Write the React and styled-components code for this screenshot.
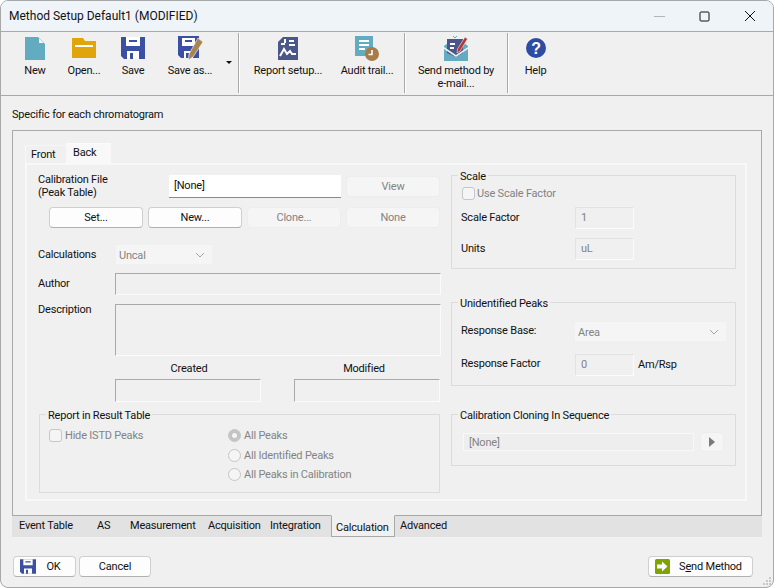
import styled, { createGlobalStyle } from "styled-components";

const GlobalStyle = createGlobalStyle`
    * { box-sizing: border-box; }
    html, body { margin: 0; padding: 0; background: #fff; }
    body { font-family: "Roboto", "Liberation Sans", sans-serif; font-size: 11px; letter-spacing: -0.2px; color: #111; }
`

const Window = styled.div`
    width: 774px;
    height: 588px;
    display: flex;
    flex-direction: column;
    position: relative;
    overflow: hidden;
    background: #f0f0f0;
    border: 1px solid #a8a8a8;
    border-radius: 8px;
`

const TitleBar = styled.div`
    height: 31px;
    flex: none;
    display: flex;
    align-items: center;
    justify-content: space-between;
    padding-left: 8px;
    background: #eff4f9;
    border-bottom: 1px solid #a9a9a9;
    font-size: 12px;
    letter-spacing: 0;
`

const WinButtons = styled.div`
    display: flex;
    align-items: center;
    gap: 34px;
    padding-right: 17px;
`

const Toolbar = styled.div`
    height: 64px;
    flex: none;
    display: flex;
    padding-left: 10px;
    border-bottom: 1px solid #a9a9a9;
`

const ToolButton = styled.div`
    width: ${(props) => props.$w}px;
    display: flex;
    flex-direction: column;
    align-items: center;
    padding-top: 3px;
    text-align: center;
    line-height: 13px;
`

const IconSlot = styled.div`
    height: 26px;
    display: flex;
    align-items: center;
    justify-content: center;
    margin-bottom: 3px;
`

const DropArrow = styled.div`
    width: 0;
    height: 0;
    margin: 29px 6px 0 3px;
    border-left: 3px solid transparent;
    border-right: 3px solid transparent;
    border-top: 3px solid #111;
`

const ToolSep = styled.div`
    width: 1px;
    height: 60px;
    margin: 1px ${(props) => props.$right || 0}px 0 ${(props) => props.$left || 0}px;
    background: #a9a9a9;
    box-shadow: 1px 0 0 #fff;
`

const Note = styled.div`
    height: 34px;
    flex: none;
    padding: 12px 0 0 11px;
    line-height: 14px;
`

const TabFrame = styled.div`
    height: 386px;
    flex: none;
    margin: 0 11px;
    padding: 12px 14px 0 12px;
    border: 1px solid #a9a9a9;
`

const TabStrip = styled.div`
    height: 20px;
    display: flex;
    align-items: flex-end;
`

const SmallTab = styled.div`
    height: ${(props) => (props.$active ? 20 : 18)}px;
    width: ${(props) => (props.$active ? 45 : 41)}px;
    padding: ${(props) => (props.$active ? "2px 0 0 6px" : "2px 0 0 5px")};
    line-height: 14px;
    background: ${(props) => (props.$active ? "#f8f8f8" : "#f0f0f0")};
    border-top: ${(props) => (props.$active ? "1px solid #fbfbfb" : "1px solid #f6f6f6")};
    border-left: 1px solid #f8f8f8;
`

const TabPage = styled.div`
    height: 338px;
    display: grid;
    grid-template-columns: 403px 285px;
    column-gap: 10px;
    padding: 10px 0 0 11px;
    border: 2px solid #f8f8f8;
    background: #f0f0f0;
`

const Column = styled.div`
    display: flex;
    flex-direction: column;
`

const Row = styled.div`
    display: flex;
    align-items: ${(props) => props.$align || "center"};
    gap: ${(props) => props.$gap || 0}px;
    height: ${(props) => (props.$h ? props.$h + "px" : "auto")};
    margin-top: ${(props) => props.$top || 0}px;
    margin-left: ${(props) => props.$left || 0}px;
    color: ${(props) => (props.$dim ? "#838383" : "inherit")};
`

const Label = styled.div`
    width: ${(props) => (props.$w ? props.$w + "px" : "auto")};
    flex: none;
    line-height: ${(props) => props.$lh || 14}px;
    margin-top: ${(props) => props.$top || 0}px;
    margin-left: ${(props) => props.$left || 0}px;
`

const FileField = styled.div`
    width: 172px;
    height: 23px;
    padding: 4px 0 0 5px;
    line-height: 14px;
    background: #fff;
    border-bottom: 1px solid #8a8a8a;
    margin-left: 1px;
`

const PushButton = styled.div`
    width: ${(props) => props.$w || 94}px;
    height: ${(props) => props.$h || 21}px;
    flex: none;
    display: flex;
    align-items: center;
    justify-content: center;
    margin-left: ${(props) => props.$left || 0}px;
    margin-top: ${(props) => props.$top || 0}px;
    border-radius: 4px;
    background: ${(props) => (props.$off ? "#f5f5f5" : "#fdfdfd")};
    border: 1px solid ${(props) => (props.$off ? "#ededed" : "#cfcfcf")};
    border-bottom-color: ${(props) => (props.$off ? "#ededed" : "#b0b0b0")};
    color: ${(props) => (props.$off ? "#838383" : "#111")};
`

const Select = styled.div`
    width: ${(props) => props.$w}px;
    height: 21px;
    display: flex;
    align-items: center;
    justify-content: space-between;
    padding: 1px 7px 0 3px;
    background: #f5f5f5;
    border: 1px solid #f0f0f0;
    color: #838383;
`

const SunkenBox = styled.div`
    width: ${(props) => props.$w}px;
    height: ${(props) => props.$h}px;
    flex: none;
    background: #f0f0f0;
    border: 1px solid #a9a9a9;
    border-right-color: #fbfbfb;
    border-bottom-color: #fbfbfb;
`

const CenterLabel = styled.div`
    width: ${(props) => props.$w}px;
    text-align: center;
    line-height: 14px;
    margin-left: ${(props) => props.$left || 0}px;
`

const ValueBox = styled.div`
    width: 59px;
    height: 22px;
    flex: none;
    padding: 3px 0 0 5px;
    line-height: 14px;
    color: #838383;
    background: #f0f0f0;
    border: 1px solid #e2e2e2;
    border-right-color: #fbfbfb;
    border-bottom-color: #fbfbfb;
`

const Group = styled.fieldset`
    margin: ${(props) => props.$top || 0}px 0 0 ${(props) => props.$left || 0}px;
    padding: 0;
    width: ${(props) => props.$w}px;
    height: ${(props) => props.$h}px;
    min-width: 0;
    border: 1px solid #dcdcdc;
    flex: none;
`

const Legend = styled.legend`
    margin-left: 6px;
    margin-bottom: -2px;
    padding: 2px 2px 0;
    line-height: 13px;
`

const CheckBox = styled.span`
    width: 13px;
    height: 13px;
    flex: none;
    background: #f5f5f5;
    border: 1px solid #c6c6c6;
    border-radius: 3px;
`

const Radio = styled.span`
    width: 13px;
    height: 13px;
    flex: none;
    display: flex;
    align-items: center;
    justify-content: center;
    border-radius: 50%;
    background: ${(props) => (props.$on ? "#c4c4c4" : "#f5f5f5")};
    border: 1px solid #c6c6c6;
    &::after {
        content: "";
        display: ${(props) => (props.$on ? "block" : "none")};
        width: 5px;
        height: 5px;
        border-radius: 50%;
        background: #f5f5f5;
    }
`

const OptionRow = styled.div`
    display: flex;
    align-items: center;
    gap: 3px;
    height: 14px;
    color: #838383;
    margin-top: ${(props) => props.$top || 0}px;
`

const ReportBody = styled.div`
    display: grid;
    grid-template-columns: 179px 1fr;
    padding: 8px 0 0 9px;
`

const CloneField = styled.div`
    width: 231px;
    height: 18px;
    padding: 2px 0 0 5px;
    line-height: 14px;
    color: #838383;
    background: #eeeeee;
    border: 1px solid #f8f8f8;
`

const ArrowRight = styled.span`
    width: 0;
    height: 0;
    border-top: 5px solid transparent;
    border-bottom: 5px solid transparent;
    border-left: 6px solid #7a7a7a;
`

const BottomTabs = styled.div`
    height: 21px;
    flex: none;
    display: flex;
    margin: 0 11px;
    background: #e2e2e2;
`

const BottomTab = styled.div`
    width: ${(props) => props.$w}px;
    flex: none;
    padding: 3px 0 0 ${(props) => props.$pad || 0}px;
    line-height: 14px;
`

const ActiveBottomTab = styled(BottomTab)`
    height: 22px;
    margin-top: -1px;
    padding-top: 5px;
    background: #f0f0f0;
    border: 1px solid #a9a9a9;
    border-top-color: #f0f0f0;
`

const Footer = styled.div`
    flex: 1;
    display: flex;
    justify-content: space-between;
    padding: 19px 20px 0 12px;
`

const FooterGroup = styled.div`
    display: flex;
    gap: 3px;
`

const FooterButton = styled(PushButton)`
    gap: ${(props) => props.$gap || 0}px;
    padding-right: ${(props) => props.$pr || 0}px;
`

const Grip = styled.svg`
    position: absolute;
    right: 1px;
    bottom: 1px;
`

const NewIcon = () => (
    <svg width="20" height="23" viewBox="0 0 20 23">
        <path d="M0 0H13L20 7V23H0Z" fill="#63abc0" />
        <path d="M14 1.5L18.5 6H14Z" fill="#fff" />
    </svg>
)

const OpenIcon = () => (
    <svg width="24" height="20" viewBox="0 0 24 20">
        <path d="M0 0H11L13 3H24V20H0Z" fill="#dfa50a" />
        <path d="M3 7H21V9H3Z" fill="#fff" />
    </svg>
)

const SaveIcon = () => (
    <svg width="24" height="22" viewBox="0 0 24 22">
        <path d="M0 0H24V22H3L0 19Z" fill="#3b50a3" />
        <path d="M5 0H19V9H5Z" fill="#fff" />
        <path d="M8 3H16V5H8Z" fill="#3b50a3" />
        <path d="M6 14H18V22H6Z" fill="#fff" />
        <path d="M9 16H12V22H9Z" fill="#3b50a3" />
    </svg>
)

const SaveAsIcon = () => (
    <svg width="25" height="24" viewBox="0 0 25 24">
        <path d="M0 0H21V22H3L0 19Z" fill="#3b50a3" />
        <path d="M4 2H17V10H4Z" fill="#fff" />
        <path d="M7 4H14V6H7Z" fill="#3b50a3" />
        <path d="M6 15H15V22H6Z" fill="#fff" />
        <path d="M8 17H11V22H8Z" fill="#3b50a3" />
        <path d="M20 2L25 6L15 21L10.5 24L11 18Z" fill="#a88450" stroke="#f0f0f0" strokeWidth="0.7" />
    </svg>
)

const ReportIcon = () => (
    <svg width="20" height="23" viewBox="0 0 20 23">
        <path d="M5 0H20V23H0V5Z" fill="#4a5788" />
        <path d="M3 6H7V8H3ZM6 2H8V6H6ZM11 3H16V5H11ZM11 7H17V9H11Z" fill="#fff" />
        <path d="M2 19L6 12L9 17L12 14L14 17L18 17" fill="none" stroke="#fff" strokeWidth="2" />
    </svg>
)

const AuditIcon = () => (
    <svg width="24" height="25" viewBox="0 0 24 25">
        <path d="M0 0H18V20H0Z" fill="#63abc0" />
        <path d="M4 4H14V6H4ZM4 8H14V10H4ZM4 12H10V14H4Z" fill="#fff" />
        <circle cx="17" cy="18" r="7" fill="#a67c47" />
        <path d="M17 14V18.5H13.5" fill="none" stroke="#fff" strokeWidth="1.6" />
    </svg>
)

const SendIcon = () => (
    <svg width="24" height="25" viewBox="0 0 24 25">
        <path d="M0 10L4 7H20L24 10V25H0Z" fill="#63abc0" />
        <path d="M3 3H19V17L12 21L3 17Z" fill="#4a5788" />
        <path d="M6 7H11V9H6ZM6 11H10V13H6Z" fill="#fff" />
        <path d="M0 11L12 19L24 11V13L12 21L0 13Z" fill="#f0f0f0" />
        <path d="M21 1L23.5 3L16 15L13 17L13.5 13Z" fill="#bd3232" stroke="#f0f0f0" strokeWidth="0.6" />
        <path d="M9 0L11 2L13 0" fill="none" stroke="#63abc0" strokeWidth="1" />
    </svg>
)

const HelpIcon = () => (
    <svg width="20" height="20" viewBox="0 0 20 20">
        <circle cx="10" cy="10" r="10" fill="#2f4ca3" />
        <text x="10" y="15.5" textAnchor="middle" fill="#fff" fontFamily="Liberation Sans" fontWeight="700" fontSize="16">?</text>
    </svg>
)

const SmallSaveIcon = () => (
    <svg width="16" height="15" viewBox="0 0 24 22">
        <path d="M0 0H24V22H3L0 19Z" fill="#3b50a3" />
        <path d="M5 0H19V9H5Z" fill="#fff" />
        <path d="M8 3H16V5H8Z" fill="#3b50a3" />
        <path d="M6 14H18V22H6Z" fill="#fff" />
        <path d="M9 16H12V22H9Z" fill="#3b50a3" />
    </svg>
)

const GoIcon = () => (
    <svg width="15" height="15" viewBox="0 0 15 15">
        <rect width="15" height="15" rx="1.5" fill="#7fa300" />
        <path d="M2 5.5H7V2.5L12.5 7.5L7 12.5V9.5H2Z" fill="#fff" />
    </svg>
)

const Chevron = () => (
    <svg width="10" height="6" viewBox="0 0 10 6">
        <path d="M1 1L5 5L9 1" fill="none" stroke="#a5a5a5" strokeWidth="1" />
    </svg>
)

const App = () => {
    return (
        <>
            <GlobalStyle />
            <Window>
                <TitleBar>
                    <span>Method Setup Default1 (MODIFIED)</span>
                    <WinButtons>
                        <svg width="11" height="11" viewBox="0 0 11 11"><path d="M0 5.5H11" stroke="#b5b5b5" /></svg>
                        <svg width="11" height="11" viewBox="0 0 11 11"><rect x="1" y="1" width="9" height="9" rx="1" fill="none" stroke="#111" /></svg>
                        <svg width="12" height="12" viewBox="0 0 12 12"><path d="M1 1L11 11M11 1L1 11" stroke="#111" /></svg>
                    </WinButtons>
                </TitleBar>

                <Toolbar>
                    <ToolButton $w={48}><IconSlot><NewIcon /></IconSlot>New</ToolButton>
                    <ToolButton $w={50}><IconSlot><OpenIcon /></IconSlot>Open...</ToolButton>
                    <ToolButton $w={48}><IconSlot><SaveIcon /></IconSlot>Save</ToolButton>
                    <ToolButton $w={66}><IconSlot><SaveAsIcon /></IconSlot>Save as...</ToolButton>
                    <DropArrow />
                    <ToolSep />
                    <ToolButton $w={98}><IconSlot><ReportIcon /></IconSlot>Report setup...</ToolButton>
                    <ToolButton $w={60}><IconSlot><AuditIcon /></IconSlot>Audit trail...</ToolButton>
                    <ToolSep $left={7} />
                    <ToolButton $w={102}><IconSlot><SendIcon /></IconSlot>Send method by<br />e-mail...</ToolButton>
                    <ToolSep />
                    <ToolButton $w={55}><IconSlot><HelpIcon /></IconSlot>Help</ToolButton>
                </Toolbar>

                <Note>Specific for each chromatogram</Note>

                <TabFrame>
                    <TabStrip>
                        <SmallTab>Front</SmallTab>
                        <SmallTab $active>Back</SmallTab>
                    </TabStrip>
                    <TabPage>
                        <Column>
                            <Row $align="flex-start" $h={23}>
                                <Label $w={130} $top={-2} $lh={13}>Calibration File<br />(Peak Table)</Label>
                                <FileField>[None]</FileField>
                                <PushButton $off $left={5} $top={1}>View</PushButton>
                            </Row>
                            <Row $gap={5} $left={11} $top={9}>
                                <PushButton>Set...</PushButton>
                                <PushButton>New...</PushButton>
                                <PushButton $off>Clone...</PushButton>
                                <PushButton $off>None</PushButton>
                            </Row>
                            <Row $top={16}>
                                <Label $w={77}>Calculations</Label>
                                <Select $w={98}>Uncal<Chevron /></Select>
                            </Row>
                            <Row $top={8}>
                                <Label $w={77}>Author</Label>
                                <SunkenBox $w={326} $h={22} />
                            </Row>
                            <Row $align="flex-start" $top={9}>
                                <Label $w={77} $top={-1}>Description</Label>
                                <SunkenBox $w={326} $h={52} />
                            </Row>
                            <Row $top={6} $left={77}>
                                <CenterLabel $w={146} $left={1}>Created</CenterLabel>
                                <CenterLabel $w={146} $left={29}>Modified</CenterLabel>
                            </Row>
                            <Row $top={3} $left={77} $gap={33}>
                                <SunkenBox $w={146} $h={23} />
                                <SunkenBox $w={146} $h={23} />
                            </Row>
                            <Group $top={5} $left={1} $w={401} $h={86}>
                                <Legend>Report in Result Table</Legend>
                                <ReportBody>
                                    <OptionRow><CheckBox />Hide ISTD Peaks</OptionRow>
                                    <Column>
                                        <OptionRow><Radio $on />All Peaks</OptionRow>
                                        <OptionRow $top={6}><Radio />All Identified Peaks</OptionRow>
                                        <OptionRow $top={5}><Radio />All Peaks in Calibration</OptionRow>
                                    </Column>
                                </ReportBody>
                            </Group>
                        </Column>

                        <Column>
                            <Group $top={-7} $w={285} $h={101}>
                                <Legend>Scale</Legend>
                                <Row $left={10} $top={5} $gap={2} $h={14} $dim>
                                    <CheckBox />Use Scale Factor
                                </Row>
                                <Row $left={9} $top={7}>
                                    <Label $w={114}>Scale Factor</Label>
                                    <ValueBox>1</ValueBox>
                                </Row>
                                <Row $left={9} $top={9}>
                                    <Label $w={114}>Units</Label>
                                    <ValueBox>uL</ValueBox>
                                </Row>
                            </Group>
                            <Group $top={26} $w={285} $h={91}>
                                <Legend>Unidentified Peaks</Legend>
                                <Row $left={9} $top={13}>
                                    <Label $w={113} $top={-2}>Response Base:</Label>
                                    <Select $w={153}>Area<Chevron /></Select>
                                </Row>
                                <Row $left={9} $top={12}>
                                    <Label $w={114} $top={-2}>Response Factor</Label>
                                    <ValueBox>0</ValueBox>
                                    <Label $left={4}>Am/Rsp</Label>
                                </Row>
                            </Group>
                            <Group $top={21} $w={285} $h={59}>
                                <Legend>Calibration Cloning In Sequence</Legend>
                                <Row $left={11} $top={12} $gap={6}>
                                    <CloneField>[None]</CloneField>
                                    <PushButton $off $w={24} $h={20}><ArrowRight /></PushButton>
                                </Row>
                            </Group>
                        </Column>
                    </TabPage>
                </TabFrame>

                <BottomTabs>
                    <BottomTab $w={78} $pad={7}>Event Table</BottomTab>
                    <BottomTab $w={33} $pad={7}>AS</BottomTab>
                    <BottomTab $w={78} $pad={7}>Measurement</BottomTab>
                    <BottomTab $w={62} $pad={7}>Acquisition</BottomTab>
                    <BottomTab $w={68} $pad={7}>Integration</BottomTab>
                    <ActiveBottomTab $w={64} $pad={4}>Calculation</ActiveBottomTab>
                    <BottomTab $w={70} $pad={5}>Advanced</BottomTab>
                </BottomTabs>

                <Footer>
                    <FooterGroup>
                        <FooterButton $w={63} $gap={10} $pr={8}><SmallSaveIcon />OK</FooterButton>
                        <FooterButton $w={72}>Cancel</FooterButton>
                    </FooterGroup>
                    <FooterButton $w={105} $gap={9} $pr={4}><GoIcon /><span>S<u>e</u>nd Method</span></FooterButton>
                </Footer>

                <Grip width="9" height="9" viewBox="0 0 9 9">
                    <path d="M6 0h2v2H6ZM3 3h2v2H3ZM6 3h2v2H6ZM0 6h2v2H0ZM3 6h2v2H3ZM6 6h2v2H6Z" fill="#c8c8c8" />
                </Grip>
            </Window>
        </>
    )
}

export default App
